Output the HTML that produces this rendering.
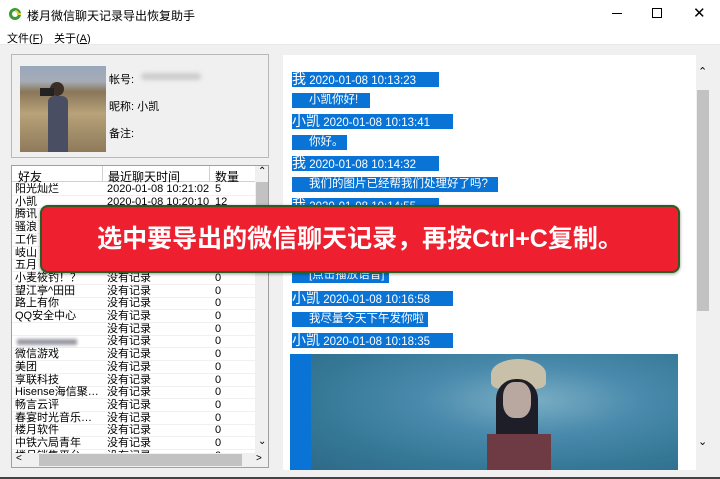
<!DOCTYPE html>
<html><head><meta charset="utf-8">
<style>
*{margin:0;padding:0;box-sizing:border-box}
body{width:720px;height:479px;overflow:hidden;background:#f0f0f0;font-family:"Liberation Sans","Noto Sans CJK SC",sans-serif;font-size:11px;color:#000;position:relative}
.abs{position:absolute}
.title{left:0;top:0;width:720px;height:28px;background:#fff}
.menu{left:0;top:28px;width:720px;height:16px;background:#fff;font-size:11px}
.row{position:absolute;left:0;height:13px;line-height:13px;width:244px;font-size:11px;border-bottom:1px solid #f0f0f0}
.row span{position:absolute;top:0;white-space:nowrap}
.hl{position:absolute;background:#0a74d6;color:#fff;height:15px;line-height:15px;font-size:11.5px;white-space:nowrap}
.hl b{font-weight:normal;font-size:14px}
</style></head><body>
<div class="abs title">
 <svg class="abs" style="left:8px;top:7px" width="14" height="14" viewBox="0 0 14 14"><circle cx="7" cy="7" r="6" fill="#3c9a35"/><circle cx="7" cy="7" r="3" fill="#fff"/><path d="M7 4 A3 3 0 0 1 10 7 L13 7" stroke="#e8d23a" stroke-width="2" fill="none"/></svg>
 <div class="abs" style="left:27px;top:7px;font-size:12px">楼月微信聊天记录导出恢复助手</div>
 <div class="abs" style="left:612px;top:13px;width:10px;height:1px;background:#000"></div>
 <div class="abs" style="left:652px;top:8px;width:10px;height:10px;border:1px solid #000"></div>
 <div class="abs" style="left:693px;top:4px;font-size:15px">✕</div>
</div>
<div class="abs menu"><span class="abs" style="left:7px;top:2px">文件(<u>F</u>)</span><span class="abs" style="left:54px;top:2px">关于(<u>A</u>)</span></div>
<div class="abs" style="left:0;top:44px;width:720px;height:1px;background:#e8e8e8"></div>

<div class="abs" style="left:11px;top:54px;width:258px;height:104px;border:1px solid #b8b8b8"></div>
<div class="abs" style="left:20px;top:66px;width:86px;height:86px;background:linear-gradient(180deg,#9aa8bc 0%,#a4acb6 18%,#8a7658 30%,#b8a27a 55%,#8e7a5a 100%)">
 <div class="abs" style="left:28px;top:30px;width:20px;height:56px;background:#4a4e62;border-radius:6px 6px 0 0"></div>
 <div class="abs" style="left:30px;top:16px;width:14px;height:14px;background:#3a2e26;border-radius:50%"></div>
 <div class="abs" style="left:20px;top:22px;width:14px;height:8px;background:#222"></div>
</div>
<div class="abs" style="left:109px;top:71px">帐号:</div>
<div class="abs" style="left:141px;top:73px;width:60px;height:7px;background:#ccc;border-radius:4px;filter:blur(2px)"></div>
<div class="abs" style="left:109px;top:98px">昵称: 小凯</div>
<div class="abs" style="left:109px;top:125px">备注:</div>

<div class="abs" style="left:11px;top:165px;width:258px;height:303px;border:1px solid #a0a0a0;background:#fff;overflow:hidden">
 <div class="abs" style="left:0;top:0;width:244px;height:16px;background:#fff;border-bottom:1px solid #d0d0d0">
  <span class="abs" style="left:6px;top:2px;font-size:12px">好友</span>
  <div class="abs" style="left:90px;top:0;width:1px;height:16px;background:#d0d0d0"></div>
  <span class="abs" style="left:96px;top:2px;font-size:12px">最近聊天时间</span>
  <div class="abs" style="left:197px;top:0;width:1px;height:16px;background:#d0d0d0"></div>
  <span class="abs" style="left:203px;top:2px;font-size:12px">数量</span>
 </div>
 <div class="abs" style="left:243px;top:0;width:14px;height:287px;background:#f0f0f0"></div>
 <div class="abs" style="left:244px;top:16px;width:12px;height:48px;background:#c2c2c2"></div>
 <div class="abs" style="left:246px;top:0px;font-size:10px">&#8963;</div>
 <div class="abs" style="left:246px;top:270px;font-size:10px">&#8964;</div>
 <div class="abs" style="left:0;top:287px;width:257px;height:14px;background:#f0f0f0"></div>
 <div class="abs" style="left:27px;top:288px;width:203px;height:12px;background:#c2c2c2"></div>
 <div class="abs" style="left:4px;top:287px;font-size:10px">&lt;</div>
 <div class="abs" style="left:244px;top:287px;font-size:10px">&gt;</div>
 <div class="abs" style="left:0;top:17px;width:244px;height:270px;overflow:hidden">
  <div class="row" style="top:0"><span style="left:3px">阳光灿烂</span><span style="left:95px">2020-01-08 10:21:02</span><span style="left:203px">5</span></div>
  <div class="row" style="top:12.7px"><span style="left:3px">小凯</span><span style="left:95px">2020-01-08 10:20:10</span><span style="left:203px">12</span></div>
  <div class="row" style="top:25.4px"><span style="left:3px">腾讯</span></div>
  <div class="row" style="top:38.1px"><span style="left:3px">骚浪</span></div>
  <div class="row" style="top:50.8px"><span style="left:3px">工作</span></div>
  <div class="row" style="top:63.5px"><span style="left:3px">岐山</span></div>
  <div class="row" style="top:76.2px"><span style="left:3px">五月</span></div>
  <div class="row" style="top:88.9px"><span style="left:3px">小麦筱钓！？</span><span style="left:95px">没有记录</span><span style="left:203px">0</span></div>
  <div class="row" style="top:101.6px"><span style="left:3px">望江亭^田田</span><span style="left:95px">没有记录</span><span style="left:203px">0</span></div>
  <div class="row" style="top:114.3px"><span style="left:3px">路上有你</span><span style="left:95px">没有记录</span><span style="left:203px">0</span></div>
  <div class="row" style="top:127px"><span style="left:3px">QQ安全中心</span><span style="left:95px">没有记录</span><span style="left:203px">0</span></div>
  <div class="row" style="top:139.7px"><span style="left:95px">没有记录</span><span style="left:203px">0</span></div>
  <div class="row" style="top:152.4px"><span style="left:5px;top:4px;width:60px;height:6px;background:#9a9aa4;filter:blur(1.5px)"></span><span style="left:95px">没有记录</span><span style="left:203px">0</span></div>
  <div class="row" style="top:165.1px"><span style="left:3px">微信游戏</span><span style="left:95px">没有记录</span><span style="left:203px">0</span></div>
  <div class="row" style="top:177.8px"><span style="left:3px">美团</span><span style="left:95px">没有记录</span><span style="left:203px">0</span></div>
  <div class="row" style="top:190.5px"><span style="left:3px">享联科技</span><span style="left:95px">没有记录</span><span style="left:203px">0</span></div>
  <div class="row" style="top:203.2px"><span style="left:3px">Hisense海信聚…</span><span style="left:95px">没有记录</span><span style="left:203px">0</span></div>
  <div class="row" style="top:215.9px"><span style="left:3px">畅言云评</span><span style="left:95px">没有记录</span><span style="left:203px">0</span></div>
  <div class="row" style="top:228.6px"><span style="left:3px">春宴时光音乐…</span><span style="left:95px">没有记录</span><span style="left:203px">0</span></div>
  <div class="row" style="top:241.3px"><span style="left:3px">楼月软件</span><span style="left:95px">没有记录</span><span style="left:203px">0</span></div>
  <div class="row" style="top:254px"><span style="left:3px">中铁六局青年</span><span style="left:95px">没有记录</span><span style="left:203px">0</span></div>
  <div class="row" style="top:266.7px"><span style="left:3px">楼月销售平台</span><span style="left:95px">没有记录</span><span style="left:203px">0</span></div>
 </div>
</div>

<div class="abs" style="left:283px;top:55px;width:427px;height:415px;background:#fff;overflow:hidden">
 <div class="abs" style="left:413px;top:0;width:14px;height:415px;background:#f0f0f0"></div>
 <div class="abs" style="left:414px;top:35px;width:12px;height:221px;background:#c2c2c2"></div>
 <div class="abs" style="left:415px;top:10px;font-size:11px">&#8963;</div>
 <div class="abs" style="left:415px;top:380px;font-size:11px">&#8964;</div>
 <div class="hl" style="left:9px;top:17px;width:147px"><b>我</b> 2020-01-08 10:13:23</div>
 <div class="hl" style="left:9px;top:38px;width:78px;padding-left:17px">小凯你好!</div>
 <div class="hl" style="left:9px;top:59px;width:161px"><b>小凯</b> 2020-01-08 10:13:41</div>
 <div class="hl" style="left:9px;top:80px;width:55px;padding-left:17px">你好。</div>
 <div class="hl" style="left:9px;top:101px;width:147px"><b>我</b> 2020-01-08 10:14:32</div>
 <div class="hl" style="left:9px;top:122px;width:206px;padding-left:17px">我们的图片已经帮我们处理好了吗?</div>
 <div class="hl" style="left:9px;top:143px;width:147px"><b>我</b> 2020-01-08 10:14:55</div>
 <div class="hl" style="left:9px;top:213px;width:97px;padding-left:17px">[点击播放语音]</div>
 <div class="hl" style="left:9px;top:236px;width:161px"><b>小凯</b> 2020-01-08 10:16:58</div>
 <div class="hl" style="left:9px;top:257px;width:136px;padding-left:17px">我尽量今天下午发你啦</div>
 <div class="hl" style="left:9px;top:278px;width:161px"><b>小凯</b> 2020-01-08 10:18:35</div>
 <div class="abs" style="left:7px;top:299px;width:388px;height:116px;background:#0a74d6"></div>
 <div class="abs" style="left:28px;top:299px;width:367px;height:116px;background:radial-gradient(ellipse at 60% 40%,#7aaec4 0%,#4a8aac 35%,#357896 70%,#2e6a88 100%)">
  <div class="abs" style="left:180px;top:5px;width:55px;height:30px;background:#c8c0a8;border-radius:50% 50% 20% 20%"></div>
  <div class="abs" style="left:185px;top:25px;width:42px;height:91px;background:#1e1e28;border-radius:20px 20px 0 0"></div>
  <div class="abs" style="left:192px;top:28px;width:28px;height:36px;background:#b8a8a0;border-radius:40%"></div>
  <div class="abs" style="left:176px;top:80px;width:64px;height:36px;background:#6e3a44"></div>
 </div>
</div>

<div class="abs" style="left:40px;top:205px;width:640px;height:68px;background:#ee1f2e;border:2px solid #2f5a22;border-radius:8px;box-shadow:0 1px 3px rgba(0,0,0,.4)">
 <div class="abs" style="left:0;top:0;width:636px;text-align:center;line-height:64px;color:#fff;font-size:25px;font-weight:bold;font-family:'Liberation Sans','Noto Sans CJK SC',sans-serif">选中要导出的微信聊天记录，再按Ctrl+C复制。</div>
</div>
<div class="abs" style="left:0;top:477px;width:720px;height:2px;background:#444"></div>
</body></html>
